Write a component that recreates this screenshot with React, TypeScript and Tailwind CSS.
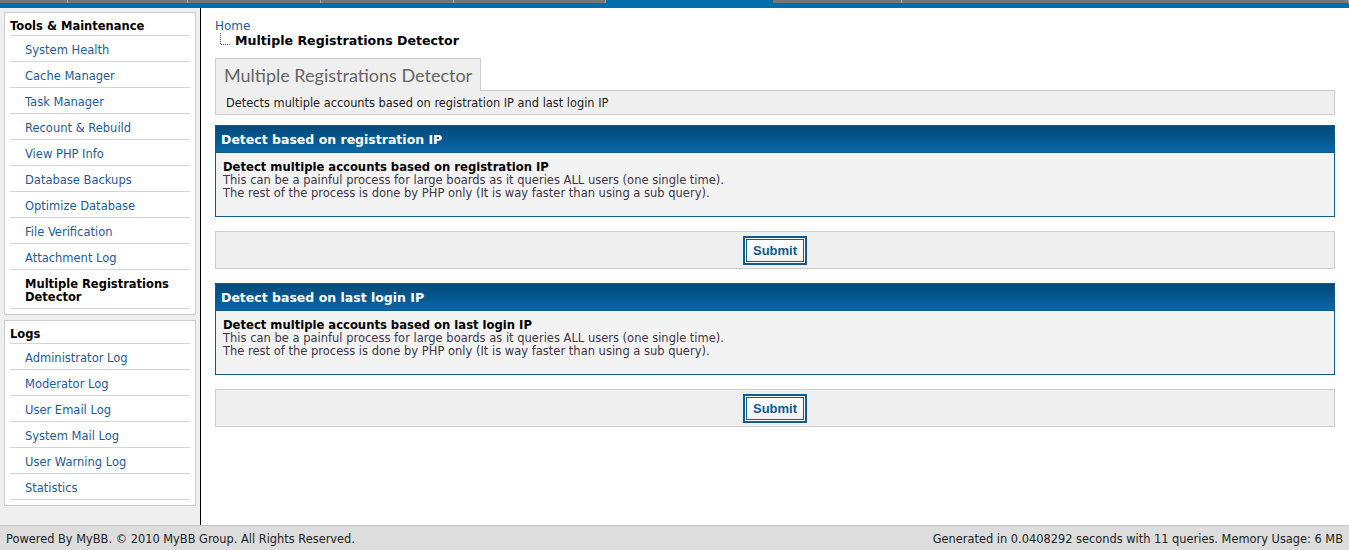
import React from 'react';

const toolsLinks = [
  'System Health',
  'Cache Manager',
  'Task Manager',
  'Recount & Rebuild',
  'View PHP Info',
  'Database Backups',
  'Optimize Database',
  'File Verification',
  'Attachment Log',
];

const logLinks = [
  'Administrator Log',
  'Moderator Log',
  'User Email Log',
  'System Mail Log',
  'User Warning Log',
  'Statistics',
];

// top navigation tabs (widths in px), the active one is blue
const tabs = [
  { w: 68 },
  { w: 120 },
  { w: 133 },
  { w: 133 },
  { w: 152 },
  { w: 167, active: true },
  { w: 129 },
  { w: 447 },
];

const SideBox = ({
  title,
  links,
  active,
}: {
  title: string;
  links: string[];
  active?: string;
}) => (
  <div className="border border-[#cccccc] bg-white px-[5px] pb-[5px]">
    <div className="h-[23px] border-b border-[#d4d4d4] pt-[7px] text-[11.5px] leading-[13px] font-bold text-black">
      {title}
    </div>
    {links.map((l) => (
      <div
        key={l}
        className="border-b border-[#d4d4d4] pt-[8px] pb-[4px] pl-[15px] pr-[5px] text-[11.5px] leading-[13px] text-[#1e5b99]"
      >
        {l}
      </div>
    ))}
    {active && (
      <div className="border-b border-[#d4d4d4] pt-[8px] pb-[4px] pl-[15px] pr-[5px] text-[11.5px] leading-[13px] font-bold text-black">
        {active}
      </div>
    )}
  </div>
);

const DetectSection = ({ heading, label }: { heading: string; label: string }) => (
  <>
    <div className="border border-[#0f5c8e]">
      <div className="h-[27px] border-b border-[#0f5c8e] bg-gradient-to-b from-[#03497a] to-[#0b67a6] px-[5px] pt-px text-[12.5px] leading-[25px] font-bold text-white">
        {heading}
      </div>
      <div className="bg-[#f3f3f3] px-[7px] pt-[8px] pb-[16px]">
        <div className="text-[11.6px] leading-[13px] font-bold text-black">{label}</div>
        <div className="text-[11.5px] leading-[13px] text-[#403646]">
          This can be a painful process for large boards as it queries ALL users (one single time).
          <br />
          The rest of the process is done by PHP only (It is way faster than using a sub query).
        </div>
      </div>
    </div>
    <div className="mt-[14px] mb-[14px] flex h-[38px] items-center justify-center border border-[#cccccc] bg-[#efefef]">
      <button className="border-2 border-[#0f5c8e] bg-white p-px">
        <span className="block h-[23px] w-[58px] border border-[#0f5c8e] bg-gradient-to-b from-white to-[#f0f0f0] font-['Liberation_Sans',Arial,sans-serif] text-[13px] leading-[21px] font-bold text-[#0f5c8e]">
          Submit
        </span>
      </button>
    </div>
  </>
);

export default function App() {
  return (
    <div className="flex h-[550px] w-[1349px] flex-col overflow-hidden bg-white font-['DejaVu_Sans',Verdana,sans-serif]">
      {/* top tab strip */}
      <div className="flex h-[3px]">
        {tabs.map((t, i) => (
          <div
            key={i}
            style={{ width: t.w }}
            className={t.active ? 'bg-[#036cad]' : 'border-r border-[#a9a9a9] bg-[#777777]'}
          />
        ))}
      </div>
      <div className="h-[5px] bg-[#036cad]" />

      <div className="flex min-h-0 flex-1">
        {/* sidebar */}
        <div className="w-[201px] shrink-0 border-r border-black bg-[#efefef] px-[4px] pt-[4px]">
          <SideBox
            title="Tools & Maintenance"
            links={toolsLinks}
            active="Multiple Registrations Detector"
          />
          <div className="h-[5px]" />
          <SideBox title="Logs" links={logLinks} />
        </div>

        {/* main content */}
        <div className="flex-1 px-[14px] pt-[11px]">
          <div className="text-[12px] leading-[15px] text-[#1e5b99]">Home</div>
          <div className="-mt-px flex items-end leading-[15px]">
            <svg width="16" height="12" className="ml-[5px] mr-[-1px] mb-[3px]" viewBox="0 0 16 12">
              <path d="M0.5 0 V11.5 H10" fill="none" stroke="#555" strokeWidth="1" strokeDasharray="1 1" />
            </svg>
            <span className="text-[12.6px] font-bold text-black">Multiple Registrations Detector</span>
          </div>

          <div className="mt-[10px]">
            <div className="relative z-10 mb-[-1px] inline-block h-[33px] border border-b-0 border-[#cccccc] bg-[#efefef] px-[8px] font-['Lato',sans-serif] text-[18px] leading-[32px] text-[#666666]">
              Multiple Registrations Detector
            </div>
            <div className="h-[25px] border border-[#cccccc] bg-[#efefef] px-[10px] text-[11.4px] leading-[24px] text-[#222222]">
              Detects multiple accounts based on registration IP and last login IP
            </div>
          </div>

          <div className="mt-[10px]">
            <DetectSection
              heading="Detect based on registration IP"
              label="Detect multiple accounts based on registration IP"
            />
            <DetectSection
              heading="Detect based on last login IP"
              label="Detect multiple accounts based on last login IP"
            />
          </div>
        </div>
      </div>

      {/* footer */}
      <div className="flex h-[25px] shrink-0 items-center justify-between border-t border-[#c4c4c4] bg-[#dddddd] px-[6px] pt-[3px] text-[11.4px] text-[#222222]">
        <span>Powered By MyBB. © 2010 MyBB Group. All Rights Reserved.</span>
        <span>Generated in 0.0408292 seconds with 11 queries. Memory Usage: 6 MB</span>
      </div>
    </div>
  );
}
